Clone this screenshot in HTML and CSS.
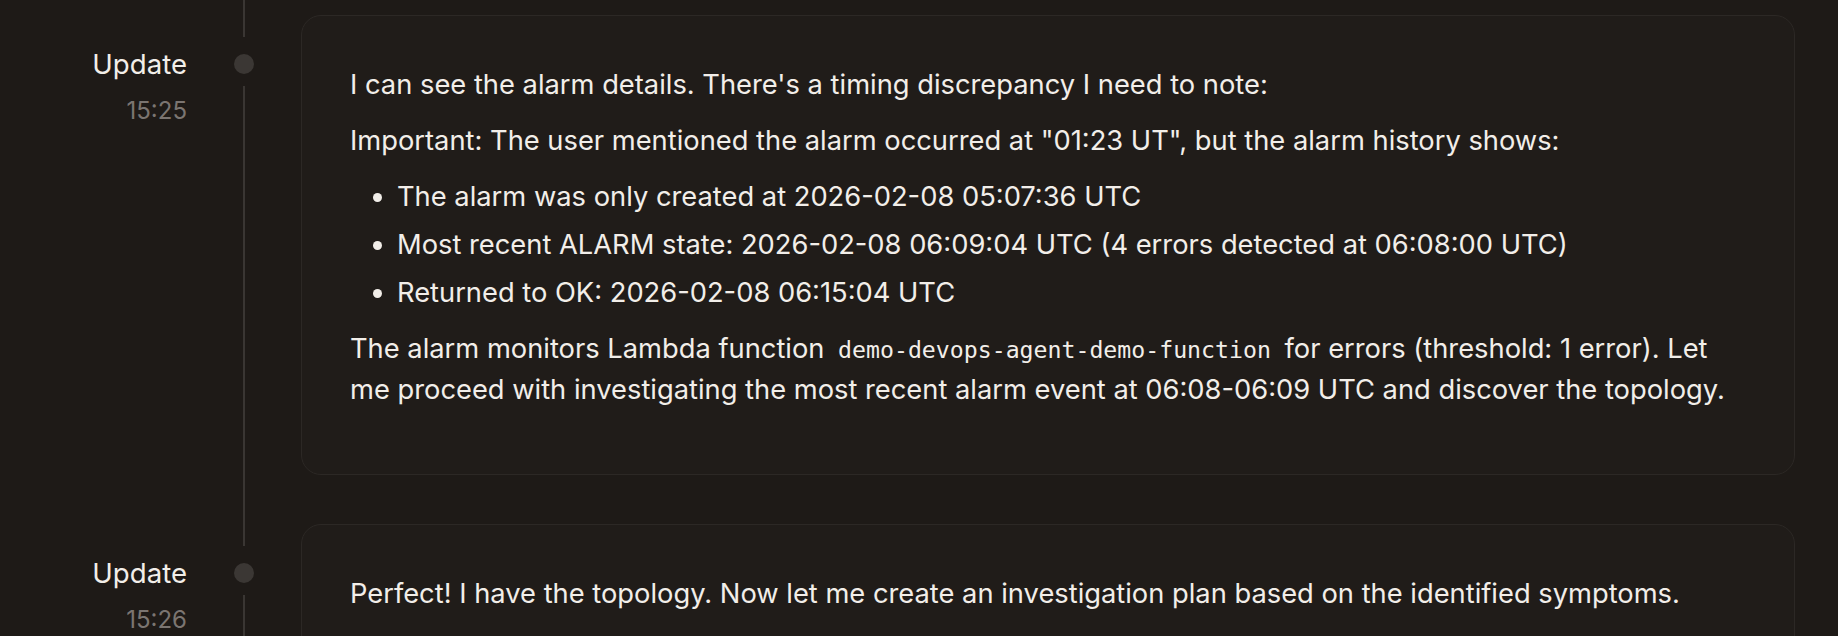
FILE: index.html
```html
<!DOCTYPE html>
<html lang="en">
<head>
<meta charset="utf-8">
<title>Timeline</title>
<link rel="stylesheet" href="styles.css">
</head>
<body>
<div class="timeline">
  <div class="item">
    <div class="meta">
      <div class="meta-title">Update</div>
      <div class="meta-time">15:25</div>
    </div>
    <div class="rail">
      <span class="seg seg-top"></span>
      <span class="dot"></span>
      <span class="seg seg-fill"></span>
    </div>
    <div class="card">
      <p>I can see the alarm details. There's a timing discrepancy I need to note:</p>
      <p>Important: The user mentioned the alarm occurred at "01:23 UT", but the alarm history shows:</p>
      <ul>
        <li>The alarm was only created at 2026-02-08 05:07:36 UTC</li>
        <li>Most recent ALARM state: 2026-02-08 06:09:04 UTC (4 errors detected at 06:08:00 UTC)</li>
        <li>Returned to OK: 2026-02-08 06:15:04 UTC</li>
      </ul>
      <p>The alarm monitors Lambda function <code>demo-devops-agent-demo-function</code> for errors (threshold: 1 error). Let me proceed with investigating the most recent alarm event at 06:08-06:09 UTC and discover the topology.</p>
    </div>
  </div>
  <div class="item">
    <div class="meta">
      <div class="meta-title">Update</div>
      <div class="meta-time">15:26</div>
    </div>
    <div class="rail">
      <span class="seg seg-top"></span>
      <span class="dot"></span>
      <span class="seg seg-fill"></span>
    </div>
    <div class="card">
      <p>Perfect! I have the topology. Now let me create an investigation plan based on the identified symptoms.</p>
    </div>
  </div>
</div>
</body>
</html>
```
FILE: styles.css
```css
html, body {
  margin: 0;
  padding: 0;
  background: #1e1a17;
  color: #f2eee9;
  font-family: Inter, "Noto Sans", sans-serif;
  overflow: hidden;
}

.timeline {
  display: flex;
  flex-direction: column;
}

.item {
  display: grid;
  grid-template-columns: 187px 114px 1fr;
  padding-right: 43px;
}

.meta {
  display: flex;
  flex-direction: column;
  align-items: flex-end;
  padding-top: 47px;
}

.meta-title {
  font-size: 27.6px;
  line-height: 34px;
  color: #f2eee9;
}

.meta-time {
  margin-top: 16px;
  font-size: 24px;
  line-height: 28px;
  color: #7b7571;
}

.rail {
  display: flex;
  flex-direction: column;
  align-items: center;
}

.seg {
  width: 2px;
  background: #3a3633;
}

.seg-top {
  height: 37px;
}

.seg-fill {
  flex: 1;
}

.dot {
  width: 20px;
  height: 20px;
  border-radius: 50%;
  background: #3b3734;
  margin: 17px 0 12px;
}

.card {
  margin: 15px 0 34px;
  padding: 49px 48px 48px;
  border: 1px solid #2c2825;
  border-radius: 20px;
  background: #201c19;
  font-size: 27.3px;
  line-height: 40px;
}

.card p {
  margin: 0 0 16px;
}

.card ul {
  margin: 0 0 16px;
  padding-left: 47px;
}

.card li {
  margin-bottom: 8px;
}

.card li:last-child {
  margin-bottom: 0;
}

.card code {
  font-family: "DejaVu Sans Mono", "Liberation Mono", monospace;
  font-size: 23.2px;
  padding: 0 6px;
}
```
